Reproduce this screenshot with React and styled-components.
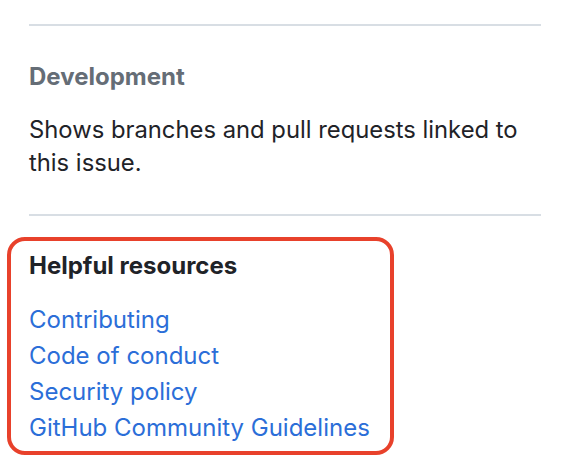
import React from "react";
import styled, { createGlobalStyle } from "styled-components";

const Global = createGlobalStyle`
  html, body { margin: 0; padding: 0; background: #ffffff; }
  body { font-family: Inter, "Noto Sans", "Liberation Sans", sans-serif; }
`;

const Sidebar = styled.div`
  width: 512px;
  padding: 24px 0 0 29px;
  display: flex;
  flex-direction: column;
`;

const Section = styled.section`
  border-top: 2px solid #d8dee4;
  border-bottom: ${(p) => (p.$bottomRule ? "2px solid #d8dee4" : "none")};
  padding: 35px 0 35px;
  display: flex;
  flex-direction: column;
  gap: 20px;
`;

const Heading = styled.h3`
  margin: 0;
  font-size: 24px;
  line-height: 32px;
  font-weight: 700;
  color: ${(p) => (p.$muted ? "#656d76" : "#1f2328")};
`;

const Body = styled.p`
  margin: 0;
  font-size: 23.8px;
  line-height: 33px;
  color: #1f2328;
`;

const Highlight = styled.div`
  align-self: flex-start;
  margin: 21px 0 0 -22px;
  border: 4px solid #e8412b;
  border-radius: 18px;
  padding: 9px 20px 5px 18px;
  display: flex;
  flex-direction: column;
  gap: 20px;
`;

const LinkList = styled.ul`
  list-style: none;
  margin: 0;
  padding: 0;
  display: flex;
  flex-direction: column;
`;

const Link = styled.a`
  display: block;
  font-size: 24px;
  line-height: 36px;
  color: #2b6ed8;
  text-decoration: none;
`;

const links = [
  "Contributing",
  "Code of conduct",
  "Security policy",
  "GitHub Community Guidelines",
];

export default function App() {
  return (
    <>
      <Global />
      <Sidebar>
        <Section $bottomRule>
          <Heading $muted>Development</Heading>
          <Body>Shows branches and pull requests linked to this issue.</Body>
        </Section>
        <Highlight>
          <Heading>Helpful resources</Heading>
          <LinkList>
            {links.map((l) => (
              <li key={l}>
                <Link href="#">{l}</Link>
              </li>
            ))}
          </LinkList>
        </Highlight>
      </Sidebar>
    </>
  );
}
